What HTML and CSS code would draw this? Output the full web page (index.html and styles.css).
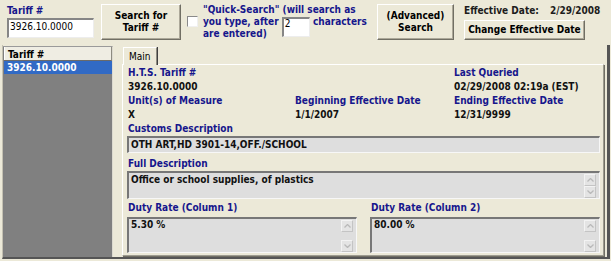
FILE: index.html
```html
<!DOCTYPE html>
<html>
<head>
  <meta charset="utf-8">
  <title>Tariff Lookup</title>
  <link rel="stylesheet" href="styles.css">
</head>
<body>
  <div class="toolbar">
    <div class="tariff-field">
      <div class="label">Tariff #</div>
      <div class="text-input tariff-input">3926.10.0000</div>
    </div>
    <button class="btn btn-search">Search for<br>Tariff #</button>
    <span class="check"></span>
    <div class="quick-text label">"Quick-Search" (will search as<br>you type, after <span class="text-input chars-input">2</span> characters<br>are entered)</div>
    <button class="btn btn-advanced">(Advanced)<br>Search</button>
    <div class="effective">
      <div class="eff-date"><span>Effective Date:</span><span class="eff-value">2/29/2008</span></div>
      <button class="btn btn-change">Change Effective Date</button>
    </div>
  </div>

  <div class="workspace">
    <div class="list">
      <div class="list-header">Tariff #</div>
      <div class="list-row selected">3926.10.0000</div>
    </div>

    <div class="tab-area">
      <div class="tab-strip">
        <div class="tab">Main</div>
      </div>
      <div class="tab-page">
        <div class="fields">
          <div class="field">
            <div class="label">H.T.S. Tariff #</div>
            <div class="value">3926.10.0000</div>
          </div>
          <div class="field"></div>
          <div class="field">
            <div class="label">Last Queried</div>
            <div class="value">02/29/2008 02:19a (EST)</div>
          </div>
          <div class="field">
            <div class="label">Unit(s) of Measure</div>
            <div class="value">X</div>
          </div>
          <div class="field">
            <div class="label">Beginning Effective Date</div>
            <div class="value">1/1/2007</div>
          </div>
          <div class="field">
            <div class="label">Ending Effective Date</div>
            <div class="value">12/31/9999</div>
          </div>
        </div>

        <div class="label section">Customs Description</div>
        <div class="box customs-box">
          <div class="box-text">OTH ART,HD 3901-14,OFF./SCHOOL</div>
        </div>

        <div class="label section full-label">Full Description</div>
        <div class="box full-box">
          <div class="box-text">Office or school supplies, of plastics</div>
          <div class="scroll">
            <span class="arrow"><svg width="7" height="4" viewBox="0 0 7 4"><polyline points="0.5,3.5 3.5,0.5 6.5,3.5" fill="none" stroke="#b9b9b9" stroke-width="1.3"/></svg></span>
            <span class="arrow"><svg width="7" height="4" viewBox="0 0 7 4"><polyline points="0.5,0.5 3.5,3.5 6.5,0.5" fill="none" stroke="#b9b9b9" stroke-width="1.3"/></svg></span>
          </div>
        </div>

        <div class="duty">
          <div>
            <div class="label section">Duty Rate (Column 1)</div>
            <div class="box duty-box">
              <div class="box-text">5.30 %</div>
              <div class="scroll">
                <span class="arrow"><svg width="7" height="4" viewBox="0 0 7 4"><polyline points="0.5,3.5 3.5,0.5 6.5,3.5" fill="none" stroke="#b9b9b9" stroke-width="1.3"/></svg></span>
                <span class="arrow"><svg width="7" height="4" viewBox="0 0 7 4"><polyline points="0.5,0.5 3.5,3.5 6.5,0.5" fill="none" stroke="#b9b9b9" stroke-width="1.3"/></svg></span>
              </div>
            </div>
          </div>
          <div>
            <div class="label section">Duty Rate (Column 2)</div>
            <div class="box duty-box">
              <div class="box-text">80.00 %</div>
              <div class="scroll">
                <span class="arrow"><svg width="7" height="4" viewBox="0 0 7 4"><polyline points="0.5,3.5 3.5,0.5 6.5,3.5" fill="none" stroke="#b9b9b9" stroke-width="1.3"/></svg></span>
                <span class="arrow"><svg width="7" height="4" viewBox="0 0 7 4"><polyline points="0.5,0.5 3.5,3.5 6.5,0.5" fill="none" stroke="#b9b9b9" stroke-width="1.3"/></svg></span>
              </div>
            </div>
          </div>
        </div>
      </div>
    </div>
  </div>
</body>
</html>
```

FILE: styles.css
```css
* {
  box-sizing: border-box;
}
html, body {
  margin: 0;
}
body {
  width: 611px;
  height: 261px;
  overflow: hidden;
  background: #ece9d8;
  font-family: "DejaVu Sans Condensed", "DejaVu Sans", sans-serif;
  font-stretch: condensed;
  font-size: 10px;
  color: #000;
}

.label {
  color: #16168c;
  font-weight: bold;
}
.value {
  font-weight: bold;
  color: #111;
}

/* top row */
.toolbar {
  display: flex;
  align-items: flex-start;
  height: 45px;
  padding-top: 4px;
}
.tariff-field {
  margin-left: 7px;
  width: 87px;
}
.tariff-field .label {
  line-height: 12px;
  margin: 1px 0 1px;
}
.text-input {
  background: #fff;
  border-style: solid;
  border-width: 2px 1px 1px 2px;
  border-color: #868686 #ededed #ededed #868686;
  color: #000;
  font-weight: normal;
}
.tariff-input {
  height: 20px;
  line-height: 14px;
  padding-left: 1px;
}
.chars-input {
  display: inline-block;
  width: 28px;
  height: 20px;
  line-height: 10px;
  vertical-align: top;
  margin-top: 1px;
  margin-bottom: -9px;
  padding-left: 1px;
}

.btn {
  font: inherit;
  font-weight: bold;
  color: #000;
  background: #ece9d8;
  border: 1px solid;
  border-color: #fff #716f64 #716f64 #fff;
  box-shadow: inset -1px -1px 0 #aca899;
  padding: 0;
  line-height: 12px;
}
.btn-search {
  margin-left: 7px;
  width: 80px;
  height: 36px;
}
.check {
  width: 11px;
  height: 11px;
  margin: 12px 0 0 6px;
  background: #fff;
  border-style: solid;
  border-width: 1px;
  border-color: #8a8a8a #f0f0f0 #f0f0f0 #8a8a8a;
}
.quick-text {
  margin-left: 5px;
  width: 168px;
  line-height: 12px;
  white-space: nowrap;
}
.btn-advanced {
  margin-left: 6px;
  width: 77px;
  height: 36px;
}
.effective {
  margin-left: 10px;
}
.eff-date {
  margin-top: 1px;
  line-height: 12px;
  font-weight: bold;
  color: #1c1c1c;
}
.eff-value {
  margin-left: 11px;
}
.btn-change {
  display: block;
  margin-top: 3px;
  width: 121px;
  height: 20px;
}

/* lower area */
.workspace {
  display: flex;
  margin-left: 2px;
  width: 608px;
  height: 214px;
  border-left: 1px solid #c4c1b2;
  border-right: 3px solid #555;
  border-bottom: 2px solid #555;
}
.list {
  width: 110px;
  margin-top: 1px;
  padding-left: 1px;
  background: #808080;
  border-top: 1px solid #9a9a9a;
  border-right: 1px solid #dcdad0;
}
.list-header {
  height: 14px;
  padding: 2px 0 0 4px;
  line-height: 11px;
  font-weight: bold;
  background: #efede3;
  box-shadow: inset 1px 0 0 #fff;
  border-bottom: 1px solid #6a6a6a;
  border-right: 1px solid #8d8b80;
}
.list-row {
  height: 13px;
  line-height: 13px;
  padding-left: 3px;
  font-weight: bold;
}
.list-row.selected {
  background: #316ac5;
  color: #fff;
}

.tab-area {
  flex: 1;
  display: flex;
  flex-direction: column;
  padding-top: 2px;
}
.tab-strip {
  display: flex;
  padding-left: 10px;
}
.tab {
  position: relative;
  z-index: 1;
  width: 34px;
  height: 18px;
  margin-bottom: -1px;
  padding: 2px 0 0 5px;
  line-height: 14px;
  background: #ece9d8;
  border-top: 1px solid #fff;
  border-left: 1px solid #fff;
  border-right: 1px solid #8d8b80;
  box-shadow: 1px 0 0 #404040;
}
.tab-page {
  flex: 1;
  margin: 0 3px 1px 9px;
  padding: 1px 3px 0 4px;
  border-top: 1px solid #fff;
  border-left: 1px solid #fff;
  border-right: 1px solid #9d9b8f;
  border-bottom: 1px solid #9d9b8f;
  box-shadow: 1px 1px 0 #716f64;
}

.fields {
  display: grid;
  grid-template-columns: 167px 159px 1fr;
}
.field .label,
.field .value,
.section {
  line-height: 14px;
  padding-left: 1px;
}
.full-label {
  margin-top: 4px;
}

.box {
  display: flex;
  background: #dedede;
  border-style: solid;
  border-width: 2px 1px 1px 2px;
  border-color: #777 #f7f7f7 #f7f7f7 #777;
}
.box-text {
  flex: 1;
  padding: 1px 2px 0;
  line-height: 12px;
  font-weight: bold;
  color: #111;
}
.customs-box {
  height: 17px;
}
.full-box {
  height: 28px;
}
.duty {
  display: grid;
  grid-template-columns: 230px 230px;
  column-gap: 13px;
  margin-top: 2px;
}
.duty-box {
  margin-top: 2px;
  height: 36px;
}
.duty-box .box-text {
  padding-top: 0;
}

.scroll {
  width: 15px;
  display: flex;
  flex-direction: column;
  justify-content: space-between;
  padding-top: 1px;
}
.arrow {
  display: flex;
  align-items: center;
  justify-content: center;
  width: 12px;
  height: 12px;
  background: #e4e4e4;
  border: 1px solid;
  border-color: #f3f3f3 #c4c4c4 #c4c4c4 #f3f3f3;
}
```
